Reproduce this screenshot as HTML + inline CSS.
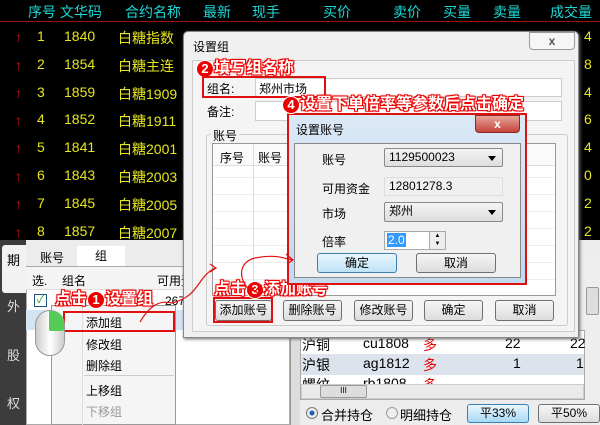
<!DOCTYPE html><html><head><meta charset="utf-8"><style>
*{margin:0;padding:0;box-sizing:border-box}
body{width:600px;height:425px;overflow:hidden;position:relative;background:#000;font-family:"Liberation Sans","Noto Sans CJK SC",sans-serif;font-size:12px;color:#000}
.a{position:absolute;white-space:nowrap}
.hd{color:#1ed8d8;font-size:14px;top:2px}
.r{color:#e6e620;font-size:14px}
.btn{position:absolute;height:21px;border:1px solid #707070;border-radius:3px;background:linear-gradient(#f6f6f6,#dcdcdc);text-align:center;line-height:19px;font-size:12px}
.red{color:#fff;font-weight:bold;font-size:16px;line-height:18px;text-shadow:0 0 2px #e00,0 0 2px #e00,1px 1px 0 #e00,-1px -1px 0 #e00,1px -1px 0 #e00,-1px 1px 0 #e00}
.num{display:inline-block;width:18px;height:18px;border-radius:50%;background:#e00;color:#fff;text-align:center;line-height:16px;font-size:13px;font-weight:bold;border:1px solid #fff;vertical-align:top}
.rb{position:absolute;border:2px solid #e01010}
.combo{position:absolute;border:1px solid #8a8a8a;border-radius:2px;background:linear-gradient(#f4f4f4,#dedede);padding-left:4px;line-height:17px}
.combo:after{content:"";position:absolute;right:6px;top:7px;border:4px solid transparent;border-top:5px solid #000}
.t{font-size:14px}
</style></head><body>
<div class="a hd" style="left:28px">序号 文华码</div>
<div class="a hd" style="left:125px">合约名称</div>
<div class="a hd" style="left:203px">最新</div>
<div class="a hd" style="left:252px">现手</div>
<div class="a hd" style="left:323px">买价</div>
<div class="a hd" style="left:393px">卖价</div>
<div class="a hd" style="left:443px">买量</div>
<div class="a hd" style="left:493px">卖量</div>
<div class="a hd" style="left:550px">成交量</div>
<div class="a" style="left:0;top:21px;width:600px;height:1px;background:#a01010"></div>
<div id="rows"></div>
<script>
var d=[["1","1840","白糖指数","4"],["2","1854","白糖主连","8"],["3","1859","白糖1909","4"],["4","1852","白糖1911","6"],["5","1841","白糖2001","4"],["6","1843","白糖2003","0"],["7","1845","白糖2005","2"],["8","1857","白糖2007","2"]];
var h="";d.forEach(function(r,i){var y=28+i*27.8;
h+='<div class="a" style="left:15px;top:'+(y+1)+'px;color:#d01010;font-size:14px;font-weight:bold">↑</div>';
h+='<div class="a r" style="left:37px;top:'+y+'px">'+r[0]+'</div>';
h+='<div class="a r" style="left:64px;top:'+y+'px">'+r[1]+'</div>';
h+='<div class="a r" style="left:118px;top:'+y+'px">'+r[2]+'</div>';
h+='<div class="a r" style="left:584px;top:'+y+'px">'+r[3]+'</div>';});
document.getElementById("rows").innerHTML=h;
</script>
<div class="a" style="left:0;top:240px;width:600px;height:185px;background:#ececec"></div>
<div class="a" style="left:0;top:240px;width:26px;height:185px;background:#3c3c3c"></div>
<div class="a" style="left:2px;top:245px;width:24px;height:48px;background:#f2f2f2;border-radius:3px 0 0 3px"></div>
<div class="a" style="left:7px;top:250px;font-size:13px">期</div>
<div class="a" style="left:7px;top:296px;font-size:13px;color:#ddd">外</div>
<div class="a" style="left:7px;top:345px;font-size:13px;color:#ddd">股</div>
<div class="a" style="left:7px;top:393px;font-size:13px;color:#ddd">权</div>
<div class="a" style="left:40px;top:249px;font-size:12px">账号</div>
<div class="a" style="left:77px;top:246px;width:48px;height:20px;background:#fff;text-align:center;line-height:20px">组</div>
<div class="a" style="left:26px;top:266px;width:264px;height:159px;background:#fff;border:1px solid #aaa"></div>
<div class="a" style="left:26px;top:267px;width:264px;height:23px;background:#f4f4f4;border-bottom:1px solid #ddd"></div>
<div class="a" style="left:32px;top:272px">选.</div>
<div class="a" style="left:62px;top:272px">组名</div>
<div class="a" style="left:157px;top:272px">可用资</div>
<div class="a" style="left:34px;top:294px;width:13px;height:13px;border:1px solid #1c5180;background:#fff;color:#2a2;font-size:11px;line-height:11px;text-align:center">✓</div>
<div class="a" style="left:26px;top:310px;width:264px;height:20px;background:#d5e4f2"></div>
<div class="a" style="left:165px;top:294px">267C</div>
<div class="a" style="left:290px;top:240px;width:10px;height:185px;background:#ddd;border-left:1px solid #999"></div>
<div class="a" style="left:300px;top:330px;width:285px;height:70px;background:#fff;border:1px solid #aaa"></div>
<div class="a" style="left:301px;top:354px;width:283px;height:21px;background:#dde3ec"></div>
<div class="a t" style="left:302px;top:335px">沪铜</div><div class="a t" style="left:363px;top:335px">cu1808</div><div class="a t" style="left:423px;top:335px;color:#e00">多</div>
<div class="a t" style="left:302px;top:355px">沪银</div><div class="a t" style="left:363px;top:355px">ag1812</div><div class="a t" style="left:423px;top:355px;color:#e00">多</div>
<div class="a t" style="left:302px;top:375px">螺纹</div><div class="a t" style="left:363px;top:375px">rb1808</div><div class="a t" style="left:423px;top:375px;color:#e00">多</div>
<div class="a t" style="left:505px;top:335px">22</div><div class="a t" style="left:570px;top:335px">22</div>
<div class="a t" style="left:513px;top:355px">1</div><div class="a t" style="left:576px;top:355px">1</div>
<div class="a" style="left:301px;top:384px;width:283px;height:15px;background:#eaeaea;border:1px solid #ccc"></div>
<div class="a" style="left:320px;top:385px;width:47px;height:13px;background:#ddd;border:1px solid #999;border-radius:2px;font-size:8px;text-align:center">III</div>
<div class="a" style="left:585px;top:255px;width:15px;height:145px;background:#eee"></div>
<div class="a" style="left:586px;top:287px;width:13px;height:28px;background:#ddd;border:1px solid #999;border-radius:2px"></div>
<div class="a" style="left:306px;top:407px;width:12px;height:12px;border-radius:50%;border:1px solid #777;background:radial-gradient(#1a5fb4 30%,#eee 40%)"></div>
<div class="a" style="left:321px;top:405px;font-size:13px">合并持仓</div>
<div class="a" style="left:386px;top:407px;width:12px;height:12px;border-radius:50%;border:1px solid #999;background:#eee"></div>
<div class="a" style="left:400px;top:405px;font-size:13px">明细持仓</div>
<div class="btn" style="left:467px;top:404px;width:62px;height:19px;line-height:17px;border-color:#3c7fb1;background:linear-gradient(#eaf6fd,#a7d9f5)">平33%</div>
<div class="btn" style="left:538px;top:404px;width:62px;height:19px;line-height:17px">平50%</div>
<div class="a" style="left:51px;top:305px;width:125px;height:120px;background:#f5f5f5;border:1px solid #999"></div>
<div class="a" style="left:82px;top:306px;width:1px;height:119px;background:#ddd"></div>
<div class="a" style="left:86px;top:314px">添加组</div>
<div class="rb" style="left:63px;top:311px;width:112px;height:21px"></div>
<div class="a" style="left:86px;top:336px">修改组</div>
<div class="a" style="left:86px;top:357px">删除组</div>
<div class="a" style="left:84px;top:375px;width:90px;height:1px;background:#ccc"></div>
<div class="a" style="left:86px;top:382px">上移组</div>
<div class="a" style="left:86px;top:403px;color:#999">下移组</div>
<div class="a" style="left:35px;top:310px;width:30px;height:46px;border-radius:15px;background:linear-gradient(90deg,#ccc,#fff,#ccc);border:1px solid #999"></div>
<div class="a" style="left:49px;top:311px;width:15px;height:20px;border-radius:0 12px 2px 2px;background:#5c5"></div>
<div class="a red" style="left:55px;top:291px">点击<span class="num">1</span>设置组</div>
<div class="a" style="left:183px;top:31px;width:396px;height:307px;background:#f0f0f0;border:1px solid #888;border-radius:5px 5px 0 0;box-shadow:1px 1px 3px #666"></div>
<div class="a" style="left:193px;top:38px">设置组</div>
<div class="a" style="left:529px;top:32px;width:46px;height:18px;border:1px solid #999;border-radius:0 0 4px 4px;background:#f6f6f6;text-align:center;font-weight:bold;color:#555;line-height:16px">x</div>
<div class="a" style="left:192px;top:60px;width:383px;height:272px;border:1px solid #ccc;background:#f4f4f4"></div>
<div class="a red" style="left:196px;top:60px"><span class="num">2</span>填写组名称</div>
<div class="a" style="left:255px;top:78px;width:307px;height:19px;background:#fff;border:1px solid #ccc"></div>
<div class="a" style="left:207px;top:80px">组名:</div>
<div class="a" style="left:259px;top:80px">郑州市场</div>
<div class="rb" style="left:202px;top:76px;width:124px;height:22px"></div>
<div class="a" style="left:207px;top:103px">备注:</div>
<div class="a" style="left:255px;top:101px;width:307px;height:20px;background:#fff;border:1px solid #ccc"></div>
<div class="a" style="left:206px;top:134px;width:362px;height:192px;border:1px solid #ccc;border-radius:3px"></div>
<div class="a" style="left:211px;top:127px;background:#f4f4f4;padding:0 2px">账号</div>
<div class="a" style="left:212px;top:143px;width:344px;height:153px;background:#fff;border:1px solid #999;background-image:repeating-linear-gradient(#fff 0 16px,#eee 16px 17px)"></div>
<div class="a" style="left:213px;top:144px;width:342px;height:22px;background:#fafafa;border-bottom:1px solid #ddd"></div>
<div class="a" style="left:220px;top:149px">序号</div><div class="a" style="left:258px;top:149px">账号</div>
<div class="a" style="left:253px;top:144px;width:1px;height:151px;background:#ddd"></div>
<div class="btn" style="left:215px;top:300px;width:57px">添加账号</div>
<div class="rb" style="left:213px;top:297px;width:60px;height:26px"></div>
<div class="btn" style="left:283px;top:300px;width:59px">删除账号</div>
<div class="btn" style="left:354px;top:300px;width:59px">修改账号</div>
<div class="btn" style="left:424px;top:300px;width:59px">确定</div>
<div class="btn" style="left:495px;top:300px;width:59px">取消</div>
<div class="a red" style="left:214px;top:281px">点击<span class="num">3</span>添加账号</div>
<div class="a" style="left:287px;top:113px;width:240px;height:172px;background:linear-gradient(#dbe9f6,#c3d9ee);border:2px solid #e01010"></div>
<div class="a" style="left:296px;top:121px">设置账号</div>
<div class="a" style="left:475px;top:115px;width:45px;height:18px;border-radius:0 0 4px 4px;background:linear-gradient(#e8a49a,#c4453a);border:1px solid #8a2a22;color:#fff;text-align:center;font-weight:bold;line-height:16px">x</div>
<div class="a" style="left:294px;top:143px;width:227px;height:135px;background:#f0f0f0;border:1px solid #888"></div>
<div class="a" style="left:322px;top:151px">账号</div>
<div class="combo" style="left:384px;top:148px;width:119px;height:19px">1129500023</div>
<div class="a" style="left:322px;top:180px">可用资金</div>
<div class="a" style="left:384px;top:177px;width:119px;height:19px;border:1px solid #ddd;background:#f0f0f0;padding-left:4px;line-height:17px">12801278.3</div>
<div class="a" style="left:322px;top:205px">市场</div>
<div class="combo" style="left:384px;top:202px;width:119px;height:20px">郑州</div>
<div class="a" style="left:322px;top:233px">倍率</div>
<div class="a" style="left:384px;top:231px;width:62px;height:19px;background:#fff;border:1px solid #aaa"></div>
<div class="a" style="left:387px;top:233px;background:#3399ff;color:#fff;padding:0 1px">2.0</div>
<div class="a" style="left:429px;top:232px;width:16px;height:17px;background:#eee;border-left:1px solid #aaa;font-size:6px;text-align:center;line-height:8px">▲<br>▼</div>
<div class="btn" style="left:317px;top:253px;width:80px;height:20px;border-color:#3c7fb1;background:linear-gradient(#eaf6fd,#bde3f7)">确定</div>
<div class="btn" style="left:416px;top:253px;width:80px;height:20px">取消</div>
<div class="a red" style="left:282px;top:96px"><span class="num">4</span>设置下单倍率等参数后点击确定</div>
<svg class="a" style="left:0;top:0" width="600" height="425"><g fill="none" stroke="#e01010" stroke-width="1.2">
<path d="M140 322 C150 305 160 300 172 303 C200 296 196 278 215 268"/><path d="M210 264 L216 268 L210 272"/>
<path d="M250 290 C238 280 238 262 255 258 C275 254 283 258 292 260"/><path d="M286 254 L293 260 L287 264"/>
<path d="M268 290 C258 296 250 292 262 285"/></g></svg>
</body></html>
